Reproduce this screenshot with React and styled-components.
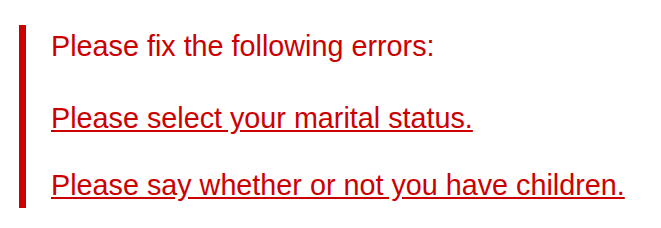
import React from "react";
import styled, { createGlobalStyle } from "styled-components";

const Global = createGlobalStyle`
  html, body { margin: 0; padding: 0; background: #fff; }
  body { font-family: "Liberation Sans", Arial, sans-serif; }
`;

const Summary = styled.div`
  margin: 25px 0 0 19px;
  height: 183px;
  box-sizing: border-box;
  border-left: 7px solid #cc0000;
  padding: 5px 0 0 25px;
  display: flex;
  flex-direction: column;
  color: #cc0000;
  font-size: 28.75px;
  line-height: 32px;
`;

const Title = styled.div`
  margin-bottom: 40px;
`;

const List = styled.ul`
  list-style: none;
  margin: 0;
  padding: 0;
  display: flex;
  flex-direction: column;
  gap: 35px;
`;

const ErrorLink = styled.a`
  color: #cc0000;
  text-decoration: underline;
`;

export default function App() {
  return (
    <>
      <Global />
      <Summary>
        <Title>Please fix the following errors:</Title>
        <List>
          <li><ErrorLink href="#marital">Please select your marital status.</ErrorLink></li>
          <li><ErrorLink href="#children">Please say whether or not you have children.</ErrorLink></li>
        </List>
      </Summary>
    </>
  );
}
